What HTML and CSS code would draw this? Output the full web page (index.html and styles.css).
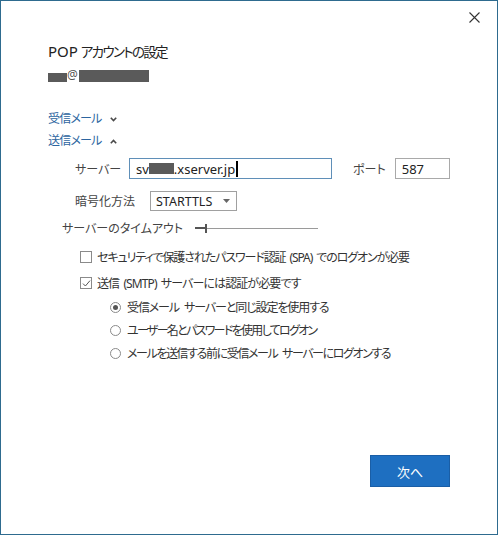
FILE: index.html
```html
<!DOCTYPE html>
<html lang="ja">
  <head>
    <meta charset="UTF-8" />
    <meta name="viewport" content="width=device-width, initial-scale=1.0" />
    <title>POP アカウントの設定</title>
    <link rel="stylesheet" href="styles.css">
  </head>
  <body>
    <div class="dialog">
      <div class="topbar">
        <button class="close" aria-label="閉じる">
          <svg width="11" height="11" viewBox="0 0 11 11">
            <path d="M0.5 0.5 L10.5 10.5 M10.5 0.5 L0.5 10.5" stroke="#333" stroke-width="1.1" fill="none" />
          </svg>
        </button>
      </div>

      <h1 class="title">POP <span class="title-ja">アカウントの設定</span></h1>
      <div class="account">
        <span class="mask mask-short"></span>
        <span class="at">@</span>
        <span class="mask mask-long"></span>
      </div>

      <div class="toggle toggle-first">
        受信メール
        <svg class="chevron" width="7" height="5" viewBox="0 0 7 5">
          <path d="M0.8 0.8 L3.5 3.6 L6.2 0.8" stroke="#4a4a4a" stroke-width="1.6" fill="none" />
        </svg>
      </div>
      <div class="toggle">
        送信メール
        <svg class="chevron" width="7" height="5" viewBox="0 0 7 5">
          <path d="M0.8 4.2 L3.5 1.4 L6.2 4.2" stroke="#4a4a4a" stroke-width="1.6" fill="none" />
        </svg>
      </div>

      <div class="settings">
        <div class="row row-server">
          <label class="label label-server">サーバー</label>
          <div class="textbox textbox-focus">
            sv<span class="mask mask-inline"></span>.xserver.jp<span class="caret"></span>
          </div>
          <label class="label label-port">ポート</label>
          <div class="textbox textbox-port">587</div>
        </div>

        <div class="row row-enc">
          <label class="label label-enc">暗号化方法</label>
          <div class="select">
            <span>STARTTLS</span>
            <svg width="7" height="4" viewBox="0 0 7 4">
              <path d="M0 0 L7 0 L3.5 4 Z" fill="#666" />
            </svg>
          </div>
        </div>

        <div class="row row-timeout">
          <label class="label label-timeout">サーバーのタイムアウト</label>
          <div class="slider">
            <span class="slider-fill"></span>
            <span class="slider-thumb"></span>
            <span class="slider-track"></span>
          </div>
        </div>

        <div class="check check-first">
          <span class="box"></span>
          <span class="check-text check-text-spa">セキュリティで保護されたパスワード認証 (SPA) でのログオンが必要</span>
        </div>
        <div class="check">
          <span class="box">
            <svg width="9" height="9" viewBox="0 0 9 9">
              <path d="M1 4.6 L3.4 7 L8 1.6" stroke="#555" stroke-width="1" fill="none" />
            </svg>
          </span>
          <span class="check-text">送信 (SMTP) サーバーには認証が必要です</span>
        </div>

        <div class="radios">
          <div class="radio radio-first">
            <span class="ring"><span class="dot"></span></span>
            <span>受信メール サーバーと同じ設定を使用する</span>
          </div>
          <div class="radio radio-second">
            <span class="ring"></span>
            <span>ユーザー名とパスワードを使用してログオン</span>
          </div>
          <div class="radio">
            <span class="ring"></span>
            <span>メールを送信する前に受信メール サーバーにログオンする</span>
          </div>
        </div>
      </div>

      <div class="footer">
        <button class="primary">次へ</button>
      </div>
    </div>
  </body>
</html>
```

FILE: styles.css
```css
body {
  margin: 0;
  padding: 0;
  background-color: #fff;
  font-family: "Noto Sans", "Noto Sans CJK JP", sans-serif;
  font-feature-settings: "palt";
  font-size: 12px;
  color: #333;
}

.dialog {
  width: 498px;
  height: 535px;
  box-sizing: border-box;
  border: 1px solid #2e6b8f;
  background-color: #fff;
  padding: 0 47px 47px 47px;
  display: flex;
  flex-direction: column;
}

.topbar {
  height: 39px;
  display: flex;
  justify-content: flex-end;
  margin-right: -30px;
}

.close {
  margin-top: 11px;
  padding: 0;
  width: 11px;
  height: 11px;
  border: none;
  background: none;
  display: flex;
}

.title {
  margin: 0;
  font-size: 15px;
  font-weight: normal;
  line-height: 22px;
  color: #222;
}

.title-ja {
  font-size: 13.5px;
  letter-spacing: -1.7px;
  margin-left: -1px;
}

.account {
  margin-top: 7px;
  height: 12px;
  display: flex;
  align-items: flex-end;
}

.mask {
  display: inline-block;
  background-color: #5a5a5a;
}

.mask-short {
  width: 19px;
  height: 9px;
}

.mask-long {
  width: 70px;
  height: 12px;
  margin-left: 1px;
}

.at {
  font-size: 12px;
  line-height: 12px;
  color: #555;
  position: relative;
  top: -1px;
}

.toggle {
  line-height: 22px;
  font-size: 12px;
  letter-spacing: -0.8px;
  color: #2c65a0;
  display: flex;
  align-items: center;
}

.toggle-first {
  margin-top: 26px;
}

.chevron {
  margin-left: 8px;
}

.settings {
  padding-left: 27px;
}

.row {
  display: flex;
  align-items: center;
}

.label {
  color: #444;
  white-space: nowrap;
}

.row-server {
  margin-top: 6px;
  height: 21px;
}

.label-server {
  width: 43px;
  text-align: right;
  margin-right: 11px;
}

.textbox {
  box-sizing: border-box;
  height: 21px;
  border: 1px solid #a9a9a9;
  font-size: 13px;
  color: #222;
  display: flex;
  align-items: center;
  padding-left: 6px;
}

.textbox-focus {
  width: 206px;
  border-color: #5f8fb8;
}

.mask-inline {
  width: 25px;
  height: 11px;
}

.caret {
  display: inline-block;
  width: 2px;
  height: 16px;
  background-color: #000;
  margin-left: 1px;
}

.label-port {
  margin-left: 21px;
  margin-right: 9px;
}

.textbox-port {
  width: 56px;
}

.row-enc {
  margin-top: 12px;
  height: 20px;
}

.label-enc {
  width: 75px;
}

.select {
  box-sizing: border-box;
  width: 87px;
  height: 20px;
  border: 1px solid #a0a0a0;
  font-size: 12.5px;
  color: #222;
  display: flex;
  align-items: center;
  justify-content: space-between;
  padding: 0 6px 0 5px;
}

.row-timeout {
  margin-top: 9px;
  height: 16px;
  margin-left: -13px;
}

.label-timeout {
  width: 133px;
}

.slider {
  width: 123px;
  height: 10px;
  display: flex;
  align-items: center;
}

.slider-fill {
  width: 10px;
  height: 2px;
  background-color: #555;
}

.slider-thumb {
  width: 2px;
  height: 9px;
  background-color: #555;
}

.slider-track {
  flex: 1;
  height: 1px;
  background-color: #9a9a9a;
}

.check {
  height: 20px;
  display: flex;
  align-items: center;
  margin-top: 6px;
  padding-left: 5px;
  color: #333;
}

.check-first {
  margin-top: 11px;
}

.check-text {
  letter-spacing: -0.9px;
  word-spacing: 2px;
  white-space: nowrap;
}

.check-text-spa {
  letter-spacing: -1.1px;
}

.box {
  box-sizing: border-box;
  flex: none;
  width: 12px;
  height: 12px;
  border: 1px solid #8a8a8a;
  margin-right: 5px;
  display: flex;
  align-items: center;
  justify-content: center;
}

.radios {
  margin-top: 4px;
  padding-left: 35px;
}

.radio {
  height: 20px;
  display: flex;
  align-items: center;
  margin-top: 3px;
  color: #333;
  letter-spacing: -1.4px;
  word-spacing: 3px;
  white-space: nowrap;
}

.radio-first {
  margin-top: 0;
  letter-spacing: -1.1px;
}

.radio-second {
  letter-spacing: -1.7px;
}

.ring {
  box-sizing: border-box;
  flex: none;
  width: 11px;
  height: 11px;
  border: 1px solid #8a8a8a;
  border-radius: 50%;
  margin-right: 6px;
  display: flex;
  align-items: center;
  justify-content: center;
}

.dot {
  width: 5px;
  height: 5px;
  border-radius: 50%;
  background-color: #555;
}

.footer {
  margin-top: auto;
  display: flex;
  justify-content: flex-end;
}

.primary {
  width: 80px;
  height: 32px;
  border: 1px solid #1a5ea6;
  background-color: #1e6fc1;
  color: #fff;
  font-family: "Noto Sans", "Noto Sans CJK JP", sans-serif;
  font-size: 13px;
  padding: 0;
}
```
